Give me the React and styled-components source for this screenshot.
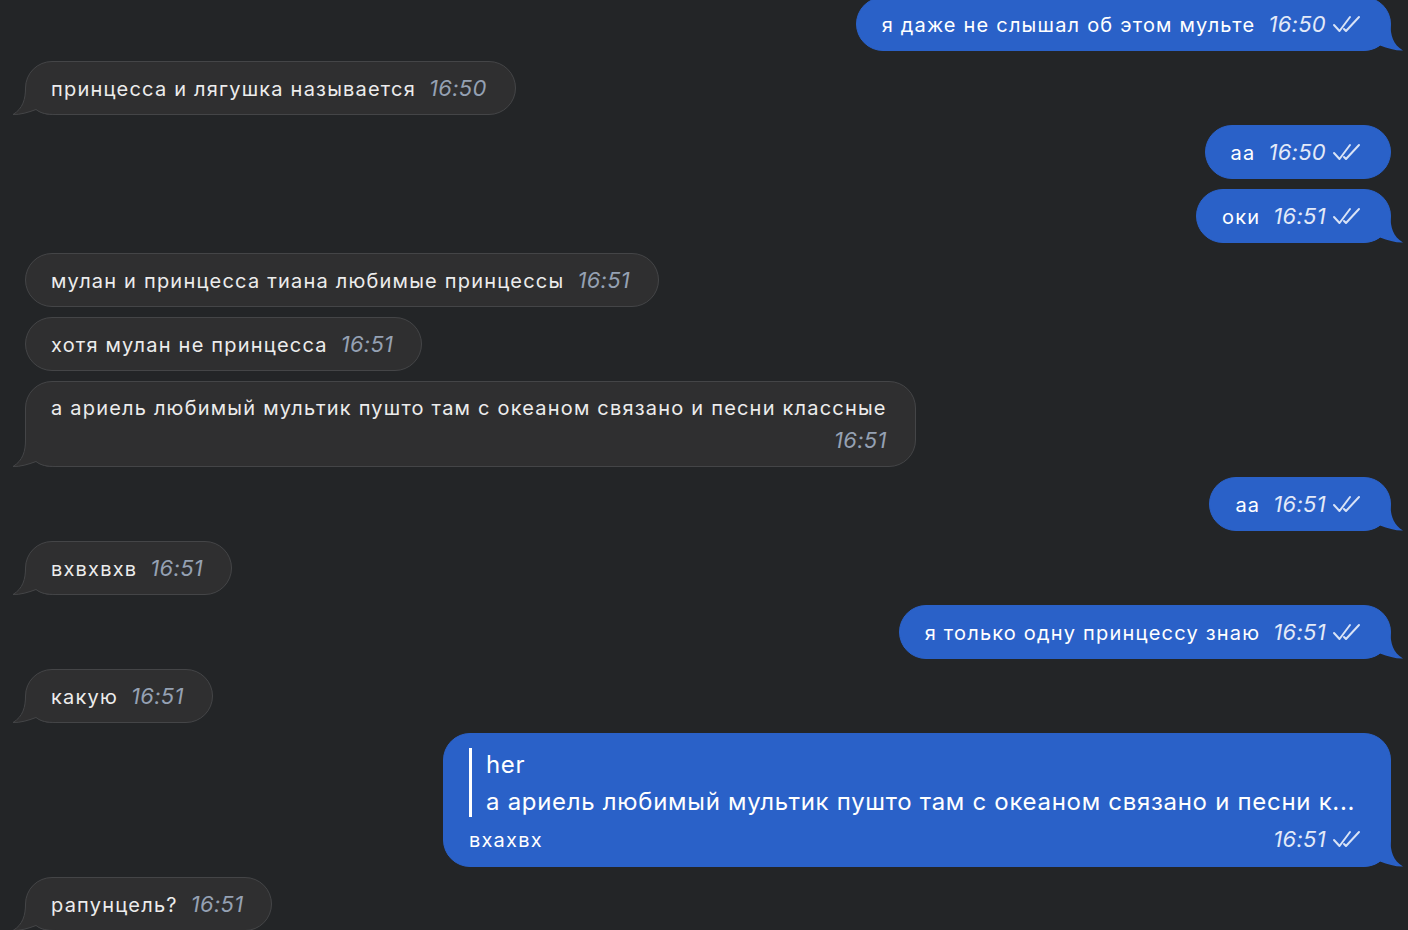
import React from "react";
import styled, { createGlobalStyle, css } from "styled-components";

const Global = createGlobalStyle`
  html, body { margin: 0; padding: 0; background: #232527; overflow: hidden; }
  body { font-family: Inter, "Noto Sans", "DejaVu Sans", sans-serif; }
  * { box-sizing: border-box; }
`;

const Page = styled.div`
  width: 1408px;
  height: 930px;
  overflow: hidden;
  background: #232527;
`;

const Feed = styled.div`
  display: flex;
  flex-direction: column;
  gap: 10px;
  padding: 0 17px 0 25px;
  margin-top: -3px;
`;

const Bubble = styled.div`
  position: relative;
  align-self: ${(p) => (p.$out ? "flex-end" : "flex-start")};
  border-radius: 27px;
  padding: 14px 28px ${(p) => (p.$wide ? "15px" : "14px")} 25px;
  min-height: 54px;
  color: ${(p) => (p.$out ? "#ffffff" : "#ececec")};
  background: ${(p) => (p.$out ? "#2a61c8" : "#2f2f30")};
  border: 1px solid ${(p) => (p.$out ? "#2a61c8" : "#444547")};
  ${(p) => p.$wide && css`width: 948px;`}
`;

const Content = styled.div`
  position: relative;
  z-index: 1;
`;

const Row = styled.div`
  display: flex;
  align-items: baseline;
  gap: 13px;
  height: 24px;
  white-space: nowrap;
`;

const Text = styled.span`
  font-size: 20px;
  line-height: 24px;
  letter-spacing: 1.2px;
`;

const Time = styled.span`
  font-size: 22px;
  line-height: 24px;
  font-style: italic;
  letter-spacing: 0.3px;
  color: ${(p) => (p.$out ? "#e3eaf8" : "#95a1b3")};
  display: inline-flex;
  align-items: center;
  gap: 6px;
`;

const TimeLine = styled.div`
  display: flex;
  justify-content: flex-end;
  margin-top: 8px;
  height: 24px;
`;

const QuoteBlock = styled.div`
  display: flex;
  flex-direction: column;
  border-left: 3px solid #ffffff;
  padding-left: 14px;
  margin-bottom: 10px;
`;

const QuoteAuthor = styled.div`
  font-size: 24px;
  line-height: 34px;
  letter-spacing: 0.6px;
  color: #ffffff;
`;

const QuoteText = styled.div`
  font-size: 24px;
  line-height: 30px;
  margin-top: 5px;
  letter-spacing: 0.7px;
  color: #ffffff;
  white-space: nowrap;
  overflow: hidden;
  text-overflow: ellipsis;
`;

const BottomRow = styled.div`
  display: flex;
  align-items: baseline;
  justify-content: space-between;
  height: 24px;
`;

const TailSvg = styled.svg`
  position: absolute;
  bottom: -1px;
  width: 44px;
  height: 30px;
  pointer-events: none;
  ${(p) =>
    p.$out
      ? css`
          right: -14px;
          transform: scaleX(-1);
        `
      : css`
          left: -14px;
        `}
`;

const SHAPE =
  "M 13.5 3 C 13.5 14, 11 23.5, 1 29.5 C 8 29.8, 16 27.5, 24 24.5 C 29 28.5, 35 29.5, 44 29.5";

function Tail({ out }) {
  const fill = out ? "#2a61c8" : "#2f2f30";
  return (
    <TailSvg $out={out} viewBox="0 0 44 30">
      <path d={SHAPE + " L 44 3 Z"} fill={fill} />
      {out ? null : (
        <path d={SHAPE} fill="none" stroke="#444547" strokeWidth="1" />
      )}
    </TailSvg>
  );
}

function Checks() {
  return (
    <svg width="30" height="20" viewBox="0 0 30 20" fill="none">
      <path
        d="M2 11 L7.5 17 L18 3"
        stroke="#d9e3f6"
        strokeWidth="2"
        strokeLinecap="round"
        strokeLinejoin="round"
      />
      <path
        d="M12 15 L14 17 L27 3"
        stroke="#d9e3f6"
        strokeWidth="2"
        strokeLinecap="round"
        strokeLinejoin="round"
      />
    </svg>
  );
}

function Msg({ out, text, time, tail }) {
  return (
    <Bubble $out={out}>
      {tail && <Tail out={out} />}
      <Content>
        <Row>
          <Text>{text}</Text>
          <Time $out={out}>
            {time}
            {out && <Checks />}
          </Time>
        </Row>
      </Content>
    </Bubble>
  );
}

export default function App() {
  return (
    <Page>
      <Global />
      <Feed>
        <Msg out text="я даже не слышал об этом мульте" time="16:50" tail />
        <Msg text="принцесса и лягушка называется" time="16:50" tail />
        <Msg out text="аа" time="16:50" />
        <Msg out text="оки" time="16:51" tail />
        <Msg text="мулан и принцесса тиана любимые принцессы" time="16:51" />
        <Msg text="хотя мулан не принцесса" time="16:51" />
        <Bubble>
          <Tail />
          <Content>
            <Row>
              <Text>
                а ариель любимый мультик пушто там с океаном связано и песни
                классные
              </Text>
            </Row>
            <TimeLine>
              <Time>16:51</Time>
            </TimeLine>
          </Content>
        </Bubble>
        <Msg out text="аа" time="16:51" tail />
        <Msg text="вхвхвхв" time="16:51" tail />
        <Msg out text="я только одну принцессу знаю" time="16:51" tail />
        <Msg text="какую" time="16:51" tail />
        <Bubble $out $wide>
          <Tail out />
          <Content>
            <QuoteBlock>
              <QuoteAuthor>her</QuoteAuthor>
              <QuoteText>
                а ариель любимый мультик пушто там с океаном связано и песни к...
              </QuoteText>
            </QuoteBlock>
            <BottomRow>
              <Text>вхахвх</Text>
              <Time $out>
                16:51
                <Checks />
              </Time>
            </BottomRow>
          </Content>
        </Bubble>
        <Msg text="рапунцель?" time="16:51" tail />
      </Feed>
    </Page>
  );
}
